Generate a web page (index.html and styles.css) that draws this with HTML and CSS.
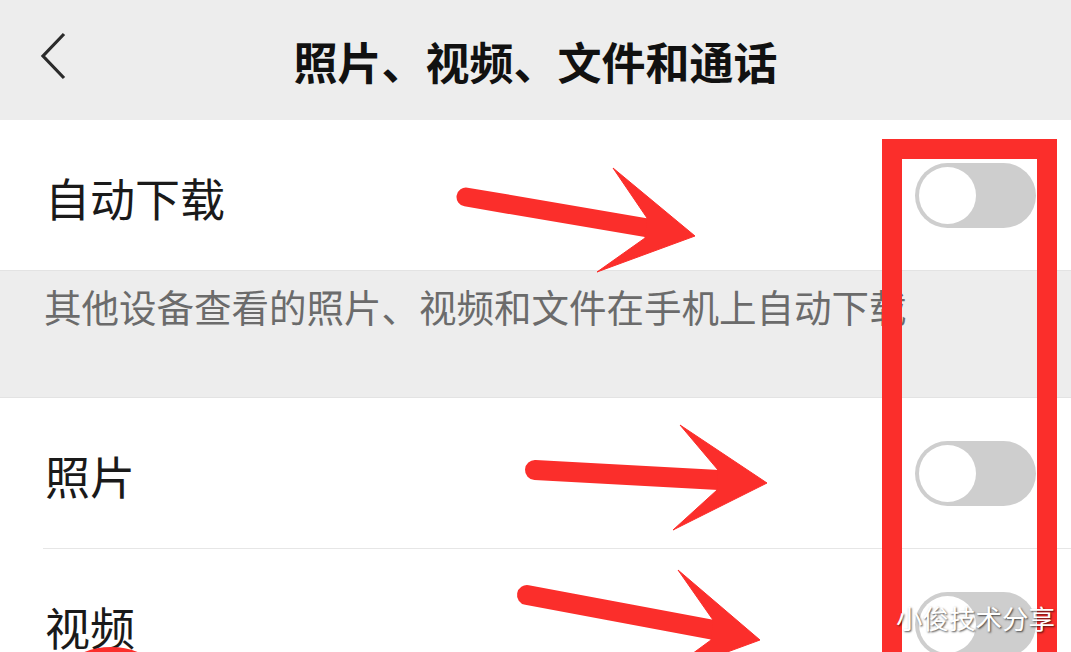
FILE: index.html
```html
<html>
    <head>
        <meta name="viewport" content="width=device-width, initial-scale=1.0">
        <link rel="stylesheet" href="styles.css">
    </head>
    <body>
        <div class="screen">
            <div class="top-bar">
                <svg class="back" width="30" height="48" viewBox="0 0 30 48">
                    <polyline points="25,2 4,24 25,46" fill="none" stroke="#2b2b2b" stroke-width="3.2"/>
                </svg>
                <h1 class="title">照片、视频、文件和通话</h1>
            </div>

            <div class="row">
                <span class="label">自动下载</span>
                <span class="switch"><span class="knob"></span></span>
            </div>
            <div class="note">其他设备查看的照片、视频和文件在手机上自动下载</div>

            <div class="row line">
                <span class="label">照片</span>
                <span class="switch"><span class="knob"></span></span>
            </div>
            <div class="row">
                <span class="label">视频</span>
                <span class="switch"><span class="knob"></span></span>
            </div>

            <!-- annotations drawn on top of the screenshot -->
            <div class="red-box"></div>
            <svg class="marks" width="1071" height="652" viewBox="0 0 1071 652">
                <g fill="#fb2e2b" stroke="#fb2e2b">
                    <line x1="466" y1="197" x2="648" y2="228" stroke-width="19" stroke-linecap="round"/>
                    <polygon points="613,168 695,236 597,272 645,238 647,218" stroke-width="1"/>

                    <line x1="535" y1="470" x2="719" y2="480" stroke-width="20" stroke-linecap="round"/>
                    <polygon points="680,425 767,483 673,530 717,490 718,470" stroke-width="1"/>

                    <line x1="527" y1="595" x2="714" y2="630" stroke-width="20" stroke-linecap="round"/>
                    <polygon points="678,570 760,640 662,676 711,640 713,620" stroke-width="1"/>
                </g>
                <circle cx="111" cy="717" r="66" fill="none" stroke="#fb2e2b" stroke-width="8"/>
            </svg>
            <div class="watermark">小俊技术分享</div>
        </div>
    </body>
</html>
```

FILE: styles.css
```css
body {
    margin: 0;
    background: #fff;
    font-family: "Noto Sans CJK SC", "Noto Sans", sans-serif;
}

.screen {
    position: relative;
    width: 1071px;
    height: 652px;
    overflow: hidden;
}

.top-bar {
    display: flex;
    align-items: center;
    justify-content: center;
    position: relative;
    height: 120px;
    background: #ededed;
}

.back {
    position: absolute;
    left: 39px;
    top: 32px;
}

.title {
    margin: 0;
    font-size: 44px;
    font-weight: 700;
    color: #111;
    line-height: 1;
    padding-top: 2px;
}

.row {
    display: flex;
    align-items: center;
    justify-content: space-between;
    height: 150px;
    padding: 0 35px 0 45px;
    background: #fff;
}

.row.line {
    height: 150px;
    border-bottom: 1px solid #e6e6e6;
    margin-left: 43px;
    padding-left: 2px;
}

.label {
    font-size: 45px;
    color: #1a1a1a;
    padding-top: 4px;
}

.switch {
    display: flex;
    align-items: center;
    width: 121px;
    height: 65px;
    border-radius: 33px;
    background: #cecece;
    box-sizing: border-box;
    padding-left: 4px;
}

.knob {
    width: 57px;
    height: 57px;
    border-radius: 50%;
    background: #fff;
}

.note {
    height: 128px;
    box-sizing: border-box;
    padding: 14px 0 0 44px;
    background: #ededed;
    border-top: 1px solid #e3e3e3;
    border-bottom: 1px solid #e3e3e3;
    font-size: 37.5px;
    line-height: 1.1;
    color: #6b6b6b;
    white-space: nowrap;
}

.red-box {
    position: absolute;
    left: 882px;
    top: 139px;
    width: 135px;
    height: 600px;
    border: 20px solid #fb2e2b;
}

.marks {
    position: absolute;
    left: 0;
    top: 0;
}

.watermark {
    position: absolute;
    left: 896px;
    top: 602px;
    font-size: 26.5px;
    line-height: 1.2;
    color: #fff;
    text-shadow: 1px 1px 2px rgba(0, 0, 0, 0.7);
}
```
